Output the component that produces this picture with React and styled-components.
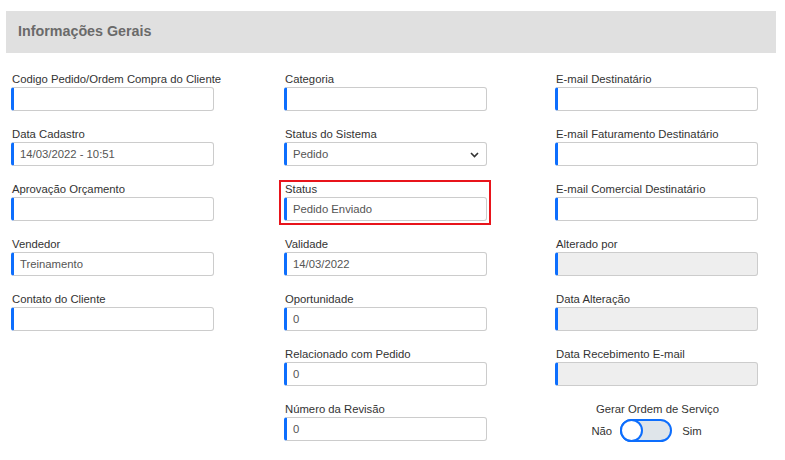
import React from "react"
import styled, { createGlobalStyle } from "styled-components"

const GlobalStyle = createGlobalStyle`
  body {
    margin: 0;
    background: #ffffff;
    font-family: "Liberation Sans", Arial, sans-serif;
  }
`

const Page = styled.div`
  width: 785px;
  height: 460px;
  padding-top: 11px;
  box-sizing: border-box;
  overflow: hidden;
`

const Header = styled.div`
  margin: 0 9px 0 6px;
  height: 42px;
  background: #e0e0e0;
  display: flex;
  align-items: center;
  padding-left: 12px;
  padding-bottom: 2px;
  box-sizing: border-box;
`

const Title = styled.h2`
  margin: 0;
  font-size: 14.3px;
  font-weight: bold;
  color: #6a6a6a;
`

const Grid = styled.div`
  display: grid;
  grid-template-columns: 273px 271px 203px;
  grid-template-rows: repeat(7, 40px);
  row-gap: 15px;
  padding: 19px 0 0 11px;
`

const Field = styled.div`
  position: relative;
  width: 203px;
  display: flex;
  flex-direction: column;
  grid-column: ${(p) => p.col};
  grid-row: ${(p) => p.row};

  ${(p) =>
    p.highlight &&
    `
    &::after {
      content: "";
      position: absolute;
      top: -2px;
      left: -5px;
      right: -4px;
      bottom: -3px;
      border: 2px solid #e8141b;
      pointer-events: none;
    }
  `}
`

const Label = styled.label`
  font-size: 11.3px;
  line-height: 14px;
  color: #333333;
  padding-left: 1px;
  margin-bottom: 1px;
  white-space: nowrap;
`

const Input = styled.div`
  height: 24px;
  box-sizing: border-box;
  border: 1px solid #cccccc;
  border-left: 3px solid #0d6efd;
  border-radius: 3px;
  background: ${(p) => (p.disabled ? "#eeeeee" : "#ffffff")};
  font-size: 11.3px;
  color: #555555;
  display: flex;
  align-items: center;
  padding: 0 8px 0 6px;
  position: relative;
`

const Chevron = styled.svg`
  position: absolute;
  right: 7px;
  top: 9px;
`

const ToggleBlock = styled.div`
  grid-column: 3;
  grid-row: 7;
  width: 203px;
  display: flex;
  flex-direction: column;
  align-items: center;
  padding-left: 2px;
  box-sizing: border-box;
`

const ToggleTitle = styled.div`
  font-size: 11.3px;
  line-height: 14px;
  color: #333333;
`

const ToggleRow = styled.div`
  display: flex;
  align-items: center;
  gap: 8px;
  margin-top: 3px;
  margin-right: 22px;
  font-size: 11.3px;
  color: #333333;
`

const Switch = styled.div`
  width: 52px;
  height: 23px;
  box-sizing: border-box;
  border: 2px solid #0d6efd;
  border-radius: 12px;
  background: #dfe5ea;
  position: relative;
  margin-right: 2px;
`

const Knob = styled.div`
  position: absolute;
  left: -2px;
  top: -2px;
  width: 23px;
  height: 23px;
  box-sizing: border-box;
  border-radius: 50%;
  border: 2px solid #0d6efd;
  background: #ffffff;
`

const fields = [
  { col: 1, row: 1, label: "Codigo Pedido/Ordem Compra do Cliente" },
  { col: 1, row: 2, label: "Data Cadastro", value: "14/03/2022 - 10:51" },
  { col: 1, row: 3, label: "Aprovação Orçamento" },
  { col: 1, row: 4, label: "Vendedor", value: "Treinamento" },
  { col: 1, row: 5, label: "Contato do Cliente" },
  { col: 2, row: 1, label: "Categoria" },
  { col: 2, row: 2, label: "Status do Sistema", value: "Pedido", select: true },
  { col: 2, row: 3, label: "Status", value: "Pedido Enviado", highlight: true },
  { col: 2, row: 4, label: "Validade", value: "14/03/2022" },
  { col: 2, row: 5, label: "Oportunidade", value: "0" },
  { col: 2, row: 6, label: "Relacionado com Pedido", value: "0" },
  { col: 2, row: 7, label: "Número da Revisão", value: "0" },
  { col: 3, row: 1, label: "E-mail Destinatário" },
  { col: 3, row: 2, label: "E-mail Faturamento Destinatário" },
  { col: 3, row: 3, label: "E-mail Comercial Destinatário" },
  { col: 3, row: 4, label: "Alterado por", disabled: true },
  { col: 3, row: 5, label: "Data Alteração", disabled: true },
  { col: 3, row: 6, label: "Data Recebimento E-mail", disabled: true },
]

export default function App() {
  return (
    <Page>
      <GlobalStyle />
      <Header>
        <Title>Informações Gerais</Title>
      </Header>
      <Grid>
        {fields.map((f) => (
          <Field key={f.label} col={f.col} row={f.row} highlight={f.highlight}>
            <Label>{f.label}</Label>
            <Input disabled={f.disabled}>
              {f.value}
              {f.select && (
                <Chevron width="9" height="6" viewBox="0 0 9 6">
                  <path d="M1 1l3.5 3.5L8 1" fill="none" stroke="#333" strokeWidth="1.6" />
                </Chevron>
              )}
            </Input>
          </Field>
        ))}
        <ToggleBlock>
          <ToggleTitle>Gerar Ordem de Serviço</ToggleTitle>
          <ToggleRow>
            <span>Não</span>
            <Switch>
              <Knob />
            </Switch>
            <span>Sim</span>
          </ToggleRow>
        </ToggleBlock>
      </Grid>
    </Page>
  )
}
